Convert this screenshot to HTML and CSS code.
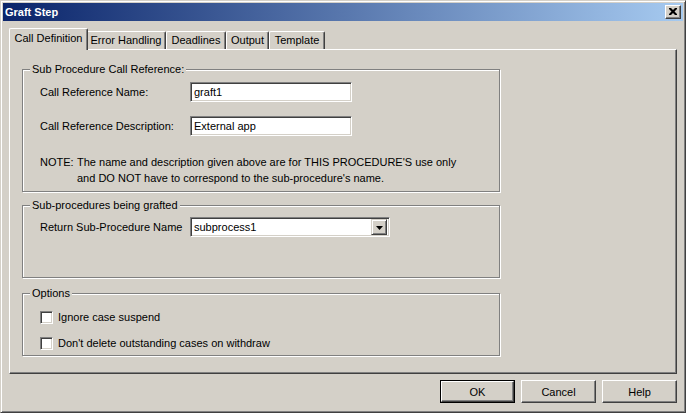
FILE: index.html
```html
<!DOCTYPE html>
<html>
<head>
<meta charset="utf-8">
<link rel="stylesheet" href="styles.css">
</head>
<body>
<div class="window">
  <div class="titlebar">
    <span class="title">Graft Step</span>
    <div class="close-btn"><svg width="8" height="7" viewBox="0 0 8 7"><path d="M0 0h2l2 2 2-2h2v1l-2.5 2.5L8 6v1H6L4 5 2 7H0V6l2.5-2.5L0 1z" fill="#000"/></svg></div>
  </div>
  <div class="main">
    <div class="tabs">
      <div class="tab active t1">Call Definition</div>
      <div class="tab t2">Error Handling</div>
      <div class="tab t3">Deadlines</div>
      <div class="tab t4">Output</div>
      <div class="tab t5">Template</div>
    </div>
    <div class="panel">
      <fieldset class="group g1">
        <legend>Sub Procedure Call Reference:</legend>
        <div class="rows">
          <div class="row">
            <span class="label">Call Reference Name:</span>
            <div class="textbox">graft1</div>
          </div>
          <div class="row">
            <span class="label">Call Reference Description:</span>
            <div class="textbox">External app</div>
          </div>
          <div class="note">
            <span class="note-head">NOTE:</span>
            <div class="note-body">
              <div>The name and description given above are for THIS PROCEDURE'S use only</div>
              <div>and DO NOT have to correspond to the sub-procedure's name.</div>
            </div>
          </div>
        </div>
      </fieldset>
      <fieldset class="group g2">
        <legend>Sub-procedures being grafted</legend>
        <div class="rows">
          <div class="row">
            <span class="label">Return Sub-Procedure Name</span>
            <div class="combo">
              <span class="combo-text">subprocess1</span>
              <div class="combo-btn"><svg width="7" height="4" viewBox="0 0 7 4"><path d="M0 0h7L3.5 4z" fill="#000"/></svg></div>
            </div>
          </div>
        </div>
      </fieldset>
      <fieldset class="group g3">
        <legend>Options</legend>
        <div class="checks">
          <div class="check"><span class="checkbox"></span><span>Ignore case suspend</span></div>
          <div class="check"><span class="checkbox"></span><span>Don't delete outstanding cases on withdraw</span></div>
        </div>
      </fieldset>
    </div>
    <div class="buttons">
      <div class="btn default"><span class="btn-inner">OK</span></div>
      <div class="btn"><span class="btn-inner">Cancel</span></div>
      <div class="btn"><span class="btn-inner">Help</span></div>
    </div>
  </div>
</div>
</body>
</html>
```
FILE: styles.css
```css
* { box-sizing: border-box; }
html, body { margin: 0; padding: 0; }
body {
  width: 686px;
  height: 413px;
  background: #d4d0c8;
  font-family: "Liberation Sans", Arial, sans-serif;
  font-size: 11px;
  color: #000;
  overflow: hidden;
}
.window {
  width: 686px;
  height: 413px;
  border: 1px solid;
  border-color: #d4d0c8 #404040 #404040 #d4d0c8;
  box-shadow: inset 1px 1px #fff, inset -1px -1px #808080;
  padding: 2px;
  display: flex;
  flex-direction: column;
  background: #d4d0c8;
}
.titlebar {
  height: 18px;
  flex: none;
  background: linear-gradient(to right, #0a246a, #a6caf0);
  display: flex;
  align-items: center;
  justify-content: space-between;
  padding: 0 2px 0 2px;
}
.title {
  color: #fff;
  font-weight: bold;
  font-size: 11px;
  line-height: 13px;
}
.close-btn {
  width: 16px;
  height: 14px;
  background: #d4d0c8;
  border: 1px solid;
  border-color: #fff #404040 #404040 #fff;
  box-shadow: inset -1px -1px #808080;
  display: flex;
  align-items: center;
  justify-content: center;
  padding: 0 1px 1px 0;
}
.main {
  flex: 1;
  display: flex;
  flex-direction: column;
  padding: 7px 6px 7px 6px;
}
.tabs {
  display: flex;
  align-items: flex-end;
  height: 21px;
  padding-left: 2px;
  position: relative;
  z-index: 2;
}
.tab {
  height: 18px;
  border: 1px solid;
  border-bottom: none;
  border-color: #fff #404040 #fff #fff;
  border-radius: 2px 2px 0 0;
  box-shadow: inset -1px 0 #808080;
  display: flex;
  align-items: center;
  justify-content: center;
  line-height: 13px;
  padding-bottom: 1px;
  background: #d4d0c8;
}
.tab.active {
  height: 22px;
  margin: 0 -2px -1px -2px;
  padding-bottom: 3px;
  position: relative;
  z-index: 3;
}
.t1 { width: 79px; }
.t2 { width: 80px; }
.t3 { width: 60px; }
.t4 { width: 43px; }
.t5 { width: 56px; }
.panel {
  height: 325px;
  border: 1px solid;
  border-color: #fff #404040 #404040 #fff;
  box-shadow: inset -1px -1px #808080;
  padding: 13px 0 0 12px;
  display: flex;
  flex-direction: column;
  align-items: flex-start;
}
.group {
  margin: 0;
  width: 478px;
  padding: 0 0 0 7px;
  border: 1px solid #808080;
  box-shadow: inset 1px 1px #fff, 1px 1px #fff;
}
.group legend {
  padding: 0 2px;
  line-height: 13px;
  background: #d4d0c8;
}
.g1 { height: 129px; }
.g2 { height: 79px; margin-top: 7px; }
.g3 { height: 69px; margin-top: 9px; }
.rows {
  margin-left: 10px;
  display: flex;
  flex-direction: column;
  gap: 14px;
}
.g1 .rows { padding-top: 6px; }
.g2 .rows { padding-top: 5px; }
.row {
  display: flex;
  align-items: center;
  height: 20px;
}
.label {
  width: 150px;
}
.textbox, .combo {
  height: 20px;
  background: #fff;
  border: 1px solid;
  border-color: #808080 #fff #fff #808080;
  box-shadow: inset 1px 1px #404040, inset -1px -1px #d4d0c8;
  padding: 0 2px 0 3px;
  display: flex;
  align-items: center;
}
.textbox { width: 162px; }
.combo {
  width: 200px;
  justify-content: space-between;
  padding: 2px 2px 2px 3px;
}
.combo-btn {
  width: 16px;
  height: 16px;
  background: #d4d0c8;
  border: 1px solid;
  border-color: #d4d0c8 #404040 #404040 #d4d0c8;
  box-shadow: inset 1px 1px #fff, inset -1px -1px #808080;
  display: flex;
  align-items: center;
  justify-content: center;
  padding-top: 1px;
}
.note {
  display: flex;
  margin-top: 4px;
  line-height: 16px;
}
.note-head { width: 37px; }
.checks {
  margin-left: 10px;
  padding-top: 4px;
  display: flex;
  flex-direction: column;
}
.check {
  height: 26px;
  display: flex;
  align-items: center;
  gap: 5px;
}
.checkbox {
  width: 13px;
  height: 13px;
  background: #fff;
  border: 1px solid;
  border-color: #808080 #fff #fff #808080;
  box-shadow: inset 1px 1px #404040, inset -1px -1px #d4d0c8;
}
.buttons {
  margin-top: 6px;
  display: flex;
  justify-content: flex-end;
  gap: 6px;
}
.btn {
  width: 75px;
  height: 23px;
  border: 1px solid;
  border-color: #fff #404040 #404040 #fff;
  box-shadow: inset -1px -1px #808080;
  display: flex;
  align-items: center;
  justify-content: center;
}
.btn.default {
  border: 1px solid #000;
  box-shadow: none;
  padding: 0;
}
.btn.default .btn-inner {
  width: 100%;
  height: 100%;
  border: 1px solid;
  border-color: #fff #404040 #404040 #fff;
  box-shadow: inset -1px -1px #808080;
  display: flex;
  align-items: center;
  justify-content: center;
}
```
